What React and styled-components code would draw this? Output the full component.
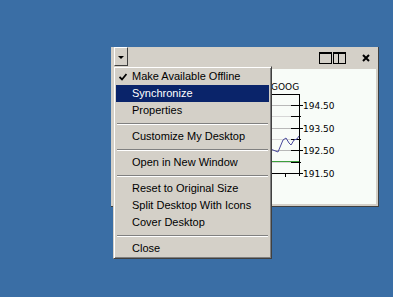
import React from "react";
import styled, { createGlobalStyle } from "styled-components";

const GlobalStyle = createGlobalStyle`
  html, body {
    margin: 0;
    padding: 0;
  }
  body {
    background: #3a6ea5;
    font-family: "Liberation Sans", Arial, sans-serif;
  }
`;

const Desktop = styled.div`
  position: relative;
  width: 393px;
  height: 297px;
  background: #3a6ea5;
  overflow: hidden;
`;

// windows sit at their place on the desktop
const Window = styled.div`
  position: absolute;
  left: 111px;
  top: 47px;
  width: 268px;
  height: 160px;
  box-sizing: border-box;
  display: flex;
  flex-direction: column;
  background: #d4d0c8;
  border-right: 1px solid #404040;
  border-bottom: 1px solid #404040;
  padding: 0 2px 2px 2px;
`;

const TitleBar = styled.div`
  height: 22px;
  flex: none;
  display: flex;
  align-items: center;
  padding-right: 6px;
`;

const DropButton = styled.div`
  align-self: flex-start;
  margin-left: 1px;
  width: 14px;
  height: 19px;
  box-sizing: border-box;
  border: 1px solid;
  border-color: #ffffff #404040 #404040 #ffffff;
  display: flex;
  justify-content: center;
  padding-top: 8px;
`;

const IconGroup = styled.div`
  margin-left: auto;
  display: flex;
  align-items: center;
  gap: ${(p) => p.$gap || 0}px;
`;

const Content = styled.div`
  flex: 1;
  background: #f8fcf8;
  overflow: hidden;
`;

const Menu = styled.div`
  position: absolute;
  left: 2px;
  top: 19px;
  width: 159px;
  box-sizing: border-box;
  background: #d4d0c8;
  border: 1px solid;
  border-color: #d4d0c8 #404040 #404040 #d4d0c8;
  box-shadow: inset 1px 1px #ffffff, inset -1px -1px #808080;
  padding: 1px 2px;
  font-size: 11px;
`;

const Item = styled.div`
  display: flex;
  align-items: center;
  height: 17px;
  line-height: 17px;
  white-space: nowrap;
  color: ${(p) => (p.$active ? "#ffffff" : "#000000")};
  background: ${(p) => (p.$active ? "#0a246a" : "transparent")};
`;

const CheckSlot = styled.span`
  width: 16px;
  flex: none;
  display: flex;
  align-items: center;
  padding-left: 3px;
  box-sizing: border-box;
`;

const Separator = styled.div`
  height: 9px;
  box-sizing: border-box;
  padding: 4px 1px 0;
  &::before {
    content: "";
    display: block;
    border-top: 1px solid #808080;
    border-bottom: 1px solid #ffffff;
  }
`;

const ChartText = styled.text`
  font-family: "DejaVu Sans", sans-serif;
  font-size: 9px;
  fill: #000;
`;

const menuItems = [
  { label: "Make Available Offline", checked: true },
  { label: "Synchronize", active: true },
  { label: "Properties" },
  "sep",
  { label: "Customize My Desktop" },
  "sep",
  { label: "Open in New Window" },
  "sep",
  { label: "Reset to Original Size" },
  { label: "Split Desktop With Icons" },
  { label: "Cover Desktop" },
  "sep",
  { label: "Close" },
];

const price = [
  [120, 140], [130, 136], [140, 144], [150, 139], [160, 147], [170, 142],
  [180, 150], [190, 145], [200, 153], [210, 148], [220, 141], [230, 146],
  [240, 139], [250, 144], [260, 150], [268, 148], [278, 152], [283, 140],
  [286, 138], [289, 143], [291, 145], [294, 140], [297, 139], [299, 136],
];

const majorTicks = [
  { y: 105.5, label: "194.50" },
  { y: 128.5, label: "193.50" },
  { y: 150.5, label: "192.50" },
  { y: 173.5, label: "191.50" },
];
const minorTicks = [116.5, 139.5, 162.5];

const Chart = () => (
  <svg width="263" height="135" viewBox="113 69 263 135" style={{ display: "block" }}>
    <ChartText x="271" y="90">GOOG</ChartText>
    <path d="M120 94.5H299" stroke="#000" />
    {majorTicks.slice(0, 3).map((t) => (
      <path key={t.y} d={`M120 ${t.y}H291`} stroke="#b8b8b8" />
    ))}
    {minorTicks.map((y) => (
      <path key={y} d={`M120 ${y}H291`} stroke="#d6d6d6" />
    ))}
    <path d="M120 161.5H299" stroke="#3ca03c" />
    <path d="M120 173.5H299M285.5 173V177" stroke="#000" />
    <path d="M299.5 94V176" stroke="#000" />
    {majorTicks.map((t) => (
      <g key={t.label}>
        <path d={`M291 ${t.y}H303`} stroke="#000" />
        <ChartText x="303" y={t.y + 3.5}>{t.label}</ChartText>
      </g>
    ))}
    {minorTicks.map((y) => (
      <path key={y} d={`M291 ${y}H301`} stroke="#000" />
    ))}
    <polyline
      points={price.map((p) => p.join(",")).join(" ")}
      fill="none"
      stroke="#4a4a9c"
      strokeWidth="1"
    />
  </svg>
);

export default function App() {
  return (
    <Desktop>
      <GlobalStyle />
      <Window>
        <TitleBar>
          <DropButton>
            <svg width="6" height="3" viewBox="0 0 6 3">
              <path d="M0 0H6L3 3Z" fill="#000" />
            </svg>
          </DropButton>
          <IconGroup>
            <svg width="14" height="13" viewBox="0 0 14 13">
              <rect x="0.5" y="0.5" width="12" height="11" fill="none" stroke="#000" />
              <path d="M0 1.5H13" stroke="#000" />
            </svg>
            <svg width="13" height="13" viewBox="0 0 13 13">
              <rect x="0.5" y="0.5" width="12" height="11" fill="none" stroke="#000" />
              <path d="M0 1.5H13M5.5 0V12" stroke="#000" />
            </svg>
          </IconGroup>
          <IconGroup style={{ marginLeft: 16 }}>
            <svg width="8" height="8" viewBox="0 0 8 8">
              <path d="M1 1L7 7M7 1L1 7" stroke="#000" strokeWidth="2" />
            </svg>
          </IconGroup>
        </TitleBar>
        <Content>
          <Chart />
        </Content>
        <Menu>
          {menuItems.map((it, i) =>
            it === "sep" ? (
              <Separator key={i} />
            ) : (
              <Item key={it.label} $active={it.active}>
                <CheckSlot>
                  {it.checked && (
                    <svg width="8" height="8" viewBox="0 0 8 8">
                      <path d="M0.5 4L3 6.5L7.5 1" fill="none" stroke="#000" strokeWidth="1.8" />
                    </svg>
                  )}
                </CheckSlot>
                {it.label}
              </Item>
            )
          )}
        </Menu>
      </Window>
    </Desktop>
  );
}
